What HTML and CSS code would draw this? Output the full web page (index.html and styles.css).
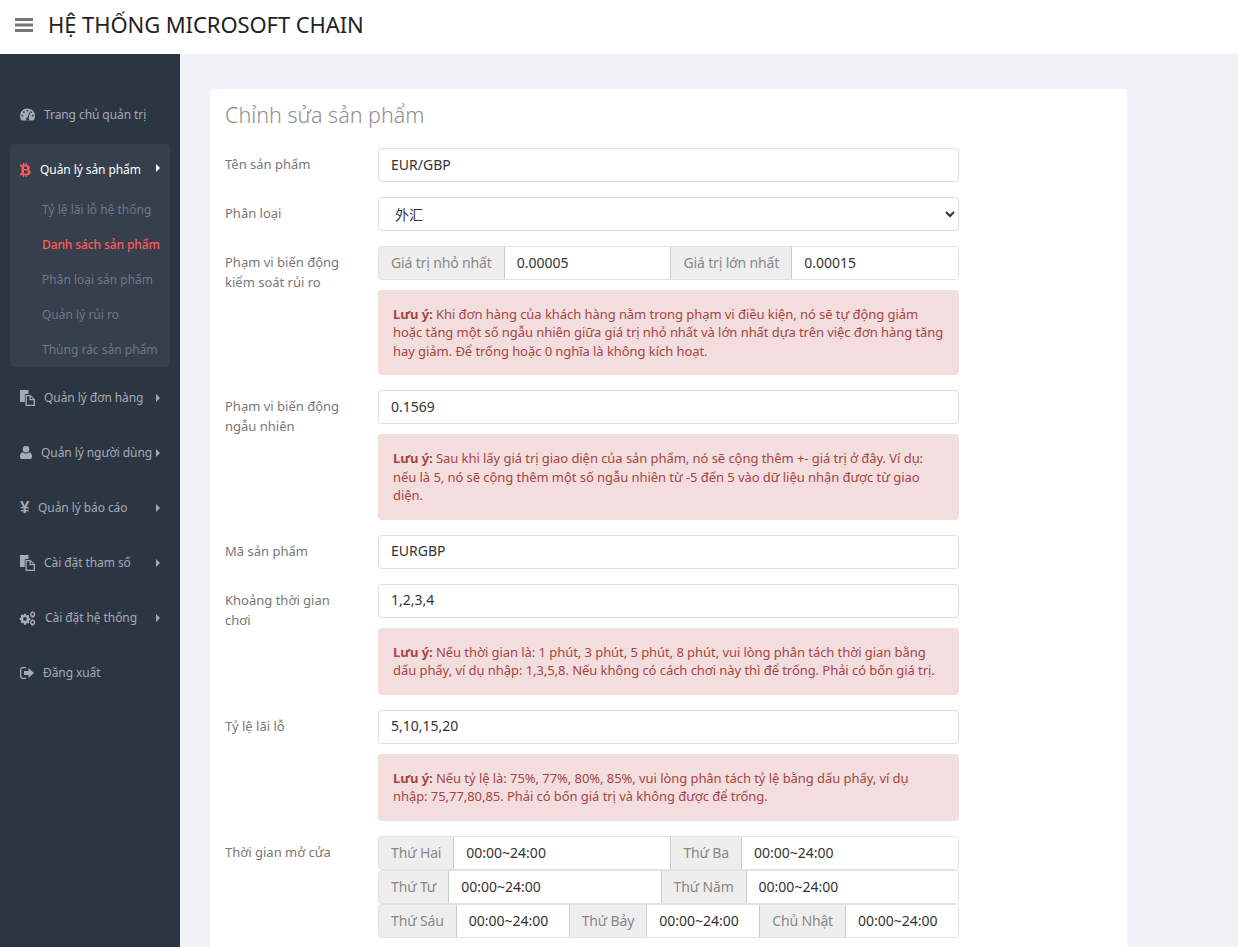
FILE: index.html
```html
<!DOCTYPE html>
<html lang="vi">
<head>
<meta charset="utf-8">
<title>Chỉnh sửa sản phẩm</title>
<link rel="stylesheet" href="styles.css">
</head>
<body>
<header class="topbar">
  <svg class="burger" viewBox="0 0 18 14" width="18" height="14"><path d="M0 0h18v3H0zM0 5.500h18v3H0zM0 11h18v3H0z"/></svg>
  <h1 class="brand">HỆ THỐNG MICROSOFT CHAIN</h1>
</header>
<div class="shell">
  <nav class="sidebar">
    <a class="nav-item"><svg class="ico ico-gauge" viewBox="0 0 16 13"><path fill-rule="evenodd" d="M8 0a8 8 0 0 0-8 8c0 1.800.600 3.500 1.700 4.700.200.200.500.300.800.300h11c.300 0 .600-.100.800-.300C15.400 11.500 16 9.800 16 8a8 8 0 0 0-8-8zM8 1.300a1 1 0 1 1 0 2 1 1 0 0 1 0-2zM4.200 2.900a1 1 0 1 1 0 2 1 1 0 0 1 0-2zM11.800 2.900a1 1 0 1 1 0 2 1 1 0 0 1 0-2zM2.500 6.700a1 1 0 1 1 0 2 1 1 0 0 1 0-2zM13.500 6.700a1 1 0 1 1 0 2 1 1 0 0 1 0-2zM9.700 4.300l.900.300-1.500 5.500a1.600 1.600 0 1 1-1-.300z"/></svg><span class="nav-label">Trang chủ quản trị</span></a>
    <div class="nav-group">
      <a class="nav-item nav-open"><svg class="ico ico-btc" viewBox="0 0 11 14"><path fill-rule="evenodd" d="M3 0h1.300v1.800H5.600V0h1.300v1.900C8.700 2.200 9.800 3 9.800 4.500c0 1-.500 1.700-1.300 2.100 1.200.300 2.200 1.200 2.200 2.700 0 1.900-1.500 2.700-3.800 2.900V14H5.600v-1.700H4.300V14H3v-1.700H0v-1.700h1.100c.300 0 .500-.200.500-.500V3.900c0-.300-.200-.500-.500-.500H0V1.800h3zM4 3.400v2.500h1.500c.900 0 1.700-.300 1.700-1.250S6.400 3.400 5.500 3.400zM4 7.600v3h1.900c1 0 2-.400 2-1.500s-1-1.500-2-1.500z"/></svg><span class="nav-label">Quản lý sản phẩm</span><i class="caret"></i></a>
      <a class="sub-item">Tỷ lệ lãi lỗ hệ thống</a>
      <a class="sub-item sub-active">Danh sách sản phẩm</a>
      <a class="sub-item">Phân loại sản phẩm</a>
      <a class="sub-item">Quản lý rủi ro</a>
      <a class="sub-item">Thùng rác sản phẩm</a>
    </div>
    <a class="nav-item"><svg class="ico ico-files" viewBox="0 0 15 16"><path fill-rule="evenodd" d="M0 0h8.500v4H6c-.800 0-1.200.400-1.200 1.200V12H0zM5.500 5h5l4.500 4.300V16H5.500zM6.800 6.300v8.400h6.900V10.200H9.500V6.300zM10.800 6.700v2.300h2.400z"/></svg><span class="nav-label">Quản lý đơn hàng</span><i class="caret"></i></a>
    <a class="nav-item"><svg class="ico ico-user" viewBox="0 0 12 13"><path d="M6 0a3.300 3.300 0 1 1 0 6.600A3.300 3.300 0 0 1 6 0zM2.800 6.200C3.700 7 4.800 7.400 6 7.400s2.300-.400 3.200-1.200c1.900.200 2.800 1.900 2.800 4.500 0 1.400-.900 2.300-2.200 2.300H2.200C.900 13 0 12.100 0 10.700c0-2.600.900-4.300 2.800-4.500z"/></svg><span class="nav-label">Quản lý người dùng</span><i class="caret"></i></a>
    <a class="nav-item"><span class="ico-yen">¥</span><span class="nav-label">Quản lý báo cáo</span><i class="caret"></i></a>
    <a class="nav-item"><svg class="ico ico-files" viewBox="0 0 15 16"><path fill-rule="evenodd" d="M0 0h8.500v4H6c-.800 0-1.200.400-1.200 1.200V12H0zM5.500 5h5l4.500 4.300V16H5.500zM6.800 6.300v8.400h6.900V10.200H9.500V6.300zM10.800 6.700v2.300h2.400z"/></svg><span class="nav-label">Cài đặt tham số</span><i class="caret"></i></a>
    <a class="nav-item"><svg class="ico ico-gear" viewBox="0 0 17 15"><path fill-rule="evenodd" d="M4.300 3h2l.300 1.300 1 .400 1.100-.700 1.400 1.400-.700 1.100.400 1 1.300.300v2l-1.300.300-.400 1 .700 1.100-1.400 1.400-1.100-.700-1 .400-.300 1.300h-2L4 13l-1-.400-1.100.700L.500 11.900l.700-1.100-.400-1L-.500 9.500v-2l1.300-.300.400-1-.700-1.100 1.400-1.400 1.100.700 1-.400zM5.300 6.500a2 2 0 1 0 0 4 2 2 0 0 0 0-4zM13.500 0l.500.900.900-.100.400.900.800.400-.200 1 .600.700-.600.700.200 1-.800.400-.400.900-.900-.100-.500.900-.500-.900-.900.100-.400-.900-.800-.400.200-1-.600-.700.600-.700-.200-1 .800-.400.400-.900.900.100zM13.500 2.200a1.300 1.300 0 1 0 0 2.600 1.300 1.300 0 0 0 0-2.600zM13.500 8.500l.500.900.900-.100.400.900.800.400-.200 1 .600.700-.600.700.200 1-.800.400-.400.900-.900-.100-.500.900-.500-.900-.900.100-.400-.900-.800-.400.200-1-.600-.700.600-.700-.200-1 .800-.400.400-.900.900.100zM13.500 10.700a1.300 1.300 0 1 0 0 2.600 1.300 1.300 0 0 0 0-2.600z"/></svg><span class="nav-label">Cài đặt hệ thống</span><i class="caret"></i></a>
    <a class="nav-item"><svg class="ico ico-out" viewBox="0 0 14 12"><path d="M3 0h3v1.300H3c-1 0-1.700.700-1.700 1.700v6c0 1 .700 1.700 1.700 1.700h3V12H3C1.300 12 0 10.700 0 9V3C0 1.300 1.300 0 3 0zM8.500 1 14 6l-5.500 5V8H4V4h4.500z"/></svg><span class="nav-label">Đăng xuất</span></a>
  </nav>
  <main class="content">
    <section class="card">
      <h2 class="card-title">Chỉnh sửa sản phẩm</h2>

      <div class="field">
        <label class="field-label">Tên sản phẩm</label>
        <div class="field-body"><input class="control" value="EUR/GBP"></div>
      </div>

      <div class="field">
        <label class="field-label">Phân loại</label>
        <div class="field-body"><select class="control select"><option>外汇</option></select></div>
      </div>

      <div class="field">
        <label class="field-label">Phạm vi biến động kiểm soát rủi ro</label>
        <div class="field-body">
          <div class="group">
            <span class="addon">Giá trị nhỏ nhất</span><input class="group-input" value="0.00005">
            <span class="addon">Giá trị lớn nhất</span><input class="group-input" value="0.00015">
          </div>
          <div class="alert"><b>Lưu ý:</b> Khi đơn hàng của khách hàng nằm trong phạm vi điều kiện, nó sẽ tự động giảm hoặc tăng một số ngẫu nhiên giữa giá trị nhỏ nhất và lớn nhất dựa trên việc đơn hàng tăng hay giảm. Để trống hoặc 0 nghĩa là không kích hoạt.</div>
        </div>
      </div>

      <div class="field">
        <label class="field-label">Phạm vi biến động ngẫu nhiên</label>
        <div class="field-body">
          <input class="control" value="0.1569">
          <div class="alert"><b>Lưu ý:</b> Sau khi lấy giá trị giao diện của sản phẩm, nó sẽ cộng thêm +- giá trị ở đây. Ví dụ: nếu là 5, nó sẽ cộng thêm một số ngẫu nhiên từ -5 đến 5 vào dữ liệu nhận được từ giao diện.</div>
        </div>
      </div>

      <div class="field">
        <label class="field-label">Mã sản phẩm</label>
        <div class="field-body"><input class="control" value="EURGBP"></div>
      </div>

      <div class="field">
        <label class="field-label">Khoảng thời gian chơi</label>
        <div class="field-body">
          <input class="control" value="1,2,3,4">
          <div class="alert"><b>Lưu ý:</b> Nếu thời gian là: 1 phút, 3 phút, 5 phút, 8 phút, vui lòng phân tách thời gian bằng dấu phẩy, ví dụ nhập: 1,3,5,8. Nếu không có cách chơi này thì để trống. Phải có bốn giá trị.</div>
        </div>
      </div>

      <div class="field">
        <label class="field-label">Tỷ lệ lãi lỗ</label>
        <div class="field-body">
          <input class="control" value="5,10,15,20">
          <div class="alert"><b>Lưu ý:</b> Nếu tỷ lệ là: 75%, 77%, 80%, 85%, vui lòng phân tách tỷ lệ bằng dấu phẩy, ví dụ nhập: 75,77,80,85. Phải có bốn giá trị và không được để trống.</div>
        </div>
      </div>

      <div class="field">
        <label class="field-label">Thời gian mở cửa</label>
        <div class="field-body">
          <div class="group">
            <span class="addon">Thứ Hai</span><input class="group-input" value="00:00~24:00">
            <span class="addon">Thứ Ba</span><input class="group-input" value="00:00~24:00">
          </div>
          <div class="group">
            <span class="addon">Thứ Tư</span><input class="group-input" value="00:00~24:00">
            <span class="addon">Thứ Năm</span><input class="group-input" value="00:00~24:00">
          </div>
          <div class="group">
            <span class="addon">Thứ Sáu</span><input class="group-input" value="00:00~24:00">
            <span class="addon">Thứ Bảy</span><input class="group-input" value="00:00~24:00">
            <span class="addon">Chủ Nhật</span><input class="group-input" value="00:00~24:00">
          </div>
        </div>
      </div>
    </section>
  </main>
</div>
</body>
</html>
```
FILE: styles.css
```css
* { box-sizing: border-box; }
html, body { margin: 0; height: 100%; overflow: hidden; }
body { font-family: "Noto Sans", "Noto Sans CJK SC", sans-serif; font-size: 14px; line-height: 20px; color: #333; background: #f0f2f7; }
.topbar { height: 54px; background: #fff; display: flex; align-items: center; padding: 0 0 4px 15px; gap: 15px; }
.burger { fill: #777; flex: none; }
.brand { margin: 0; padding-bottom: 2px; font-size: 22px; font-weight: 400; letter-spacing: -.08px; color: #222; line-height: 30px; }
.shell { display: flex; height: 893px; }
.sidebar { width: 180px; flex: none; background: #2c3542; padding: 33px 10px 0; }
.nav-item { height: 55px; display: flex; align-items: center; padding: 0 10px; color: #a4abb5; font-size: 12px; position: relative; }
.ico { fill: #a4abb5; flex: none; margin-right: 9px; overflow: visible; }
.ico-gauge { width: 15px; height: 13px; }
.ico-files { width: 15px; height: 16px; }
.ico-btc { width: 11px; height: 14px; fill: #ff5a5a; }
.ico-user { width: 12px; height: 13px; }
.ico-gear { width: 16px; height: 14px; }
.ico-out { width: 14px; height: 12px; }
.ico-yen { color: #a4abb5; font-family: "Liberation Sans", sans-serif; font-size: 17px; font-weight: 700; width: 9px; margin-right: 9px; line-height: 15px; }
.nav-label { white-space: nowrap; letter-spacing: -.08px; }
.caret { position: absolute; right: 10px; top: 50%; margin-top: -4px; border-left: 4px solid currentColor; border-top: 4px solid transparent; border-bottom: 4px solid transparent; }
.nav-group { background: #363f4c; border-radius: 4px; height: 223px; margin: 2px 0 3px; }
.nav-open { color: #fff; height: 48px; padding-top: 3px; }
.sub-item { display: block; height: 35px; line-height: 35px; padding-left: 32px; font-size: 12px; color: #6f7884; white-space: nowrap; }
.sub-active { color: #ff5a5a; font-weight: 500; letter-spacing: -.1px; }
.content { flex: 1; padding: 35px 111px 0 30px; }
.card { background: #fff; border-radius: 4px; padding: 9px 15px 0; height: 900px; }
.card-title { margin: 0 0 17px; font-size: 21.5px; font-weight: 300; line-height: 33px; color: #8f8f8f; }
.field { display: grid; grid-template-columns: 153px 581px; margin-bottom: 15px; }
.field-label { padding: 6px 30px 0 0; color: #777; font-size: 13px; font-weight: 400; }
.control { display: block; width: 100%; height: 34px; padding: 5px 12px 7px; border: 1px solid #ddd; border-radius: 4px; background: #fff; font: inherit; color: #333; outline: none; }
.select { padding-left: 12px; padding-top: 6px; padding-bottom: 6px; }
.group { display: flex; height: 34px; border: 1px solid #e3e3e3; border-radius: 4px; overflow: hidden; }
.addon { flex: none; display: flex; align-items: center; padding: 0 12px; background: #eee; border: 1px solid #ccc; color: #888; letter-spacing: -.15px; white-space: nowrap; margin: -1px 0; }
.addon:first-child { margin-left: -1px; border-radius: 4px 0 0 4px; }
.group-input { flex: 1 1 0; min-width: 0; border: 0; padding: 0 12px; font: inherit; color: #333; background: #fff; outline: none; }
.alert { margin-top: 10px; padding: 15px; background: #f2dede; border-radius: 4px; color: #a94442; font-size: 13px; line-height: 18.45px; letter-spacing: -.06px; }
.alert b { font-weight: 700; }
```
